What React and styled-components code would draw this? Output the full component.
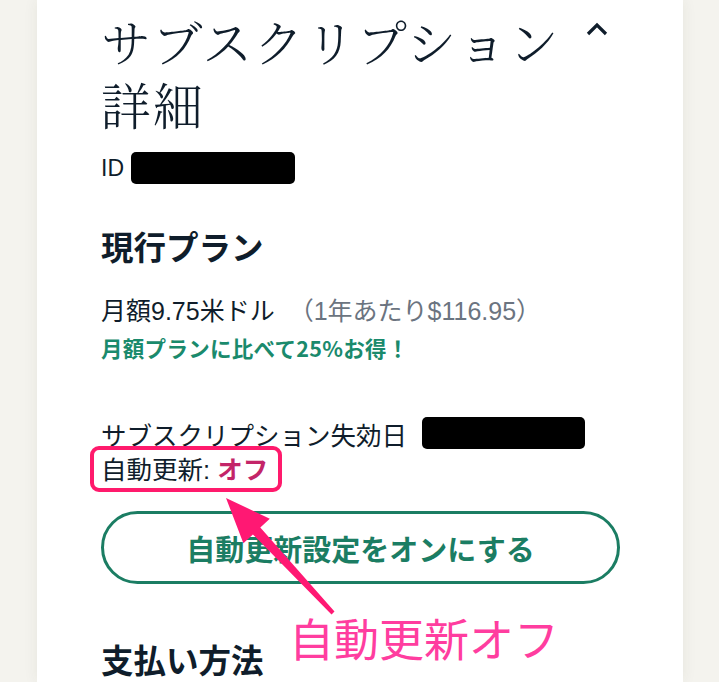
import React from "react";
import styled, { createGlobalStyle } from "styled-components";

const GlobalStyle = createGlobalStyle`
  html, body {
    margin: 0;
    padding: 0;
    background: #f4f3ee;
    overflow: hidden;
  }
  body {
    font-family: "Liberation Sans", "Noto Sans CJK JP", sans-serif;
    color: #0f1d2b;
  }
`;

const Page = styled.div`
  position: relative;
  width: 719px;
  height: 682px;
  overflow: hidden;
`;

const Card = styled.main`
  box-sizing: border-box;
  margin-left: 37px;
  width: 646px;
  height: 682px;
  padding: 9px 0 0 64px;
  background: #fff;
  box-shadow: 0 0 14px rgba(60, 50, 20, 0.07);
`;

const Title = styled.h1`
  margin: 0;
  font-family: "Noto Serif CJK JP", "Noto Sans CJK JP", serif;
  font-weight: 300;
  font-size: 50px;
  line-height: 63px;
  color: #0f1d2b;
  letter-spacing: 1.6px;

  svg {
    margin-left: 26px;
    vertical-align: 26px;
  }
`;

const Row = styled.div`
  display: flex;
  align-items: center;
  gap: ${(p) => p.$gap || 7}px;
  height: 32px;
  margin-top: ${(p) => p.$top}px;
  font-size: ${(p) => p.$size || 24}px;
`;

const Redacted = styled.span`
  display: inline-block;
  width: ${(p) => p.$w}px;
  height: 32px;
  background: #000;
  border-radius: 5px;
`;

const Heading = styled.h2`
  margin: ${(p) => p.$top}px 0 0;
  font-family: "Noto Sans CJK JP", sans-serif;
  font-weight: 700;
  font-size: 32.5px;
  line-height: 40px;
  color: #0f1d2b;
`;

const Price = styled.p`
  margin: 28px 0 0;
  font-size: 25px;
  line-height: 34px;

  span {
    color: #6b7480;
    margin-left: 14px;
  }
`;

const Deal = styled.p`
  margin: 7px 0 0;
  font-family: "Noto Sans CJK JP", sans-serif;
  font-weight: 700;
  font-size: 21.5px;
  line-height: 26px;
  letter-spacing: 0.3px;
  color: #1a8a6c;
`;

const Highlight = styled.div`
  display: inline-block;
  margin: -3px 0 0 -11px;
  padding: 0 10px 0 7px;
  border: 4px solid #ff1a6c;
  border-radius: 9px;
  font-size: 25.5px;
  line-height: 36px;

  b {
    color: #c32568;
    font-family: "Noto Sans CJK JP", sans-serif;
    font-weight: 700;
  }
`;

const OutlineButton = styled.button`
  display: block;
  box-sizing: border-box;
  width: 519px;
  height: 73px;
  margin-top: 19px;
  border: 3px solid #1b7d63;
  border-radius: 37px;
  background: #fff;
  color: #1b7d63;
  font-family: "Noto Sans CJK JP", sans-serif;
  font-weight: 700;
  font-size: 29px;
  cursor: pointer;
`;

const Overlay = styled.svg`
  position: absolute;
  top: 0;
  left: 0;
  pointer-events: none;
`;

const Note = styled.div`
  position: absolute;
  left: 289px;
  top: 611px;
  font-family: "Noto Sans CJK JP", sans-serif;
  font-size: 45px;
  line-height: 54px;
  color: #ff3d9f;
  white-space: nowrap;
`;

const Chevron = () => (
  <svg width="22" height="14" viewBox="0 0 22 14">
    <path d="M2 12 L11 3 L20 12" fill="none" stroke="#0f1d2b" strokeWidth="3.2" />
  </svg>
);

export default function App() {
  return (
    <Page>
      <GlobalStyle />
      <Card>
        <Title>
          サブスクリプション<Chevron />
          <br />
          詳細
        </Title>
        <Row $top={17} $size={23}>
          ID <Redacted $w={164} />
        </Row>
        <Heading $top={42}>現行プラン</Heading>
        <Price>
          月額9.75米ドル<span>（1年あたり$116.95）</span>
        </Price>
        <Deal>月額プランに比べて25%お得！</Deal>
        <Row $top={56} $size={25.5} $gap={15}>
          サブスクリプション失効日 <Redacted $w={163} />
        </Row>
        <Highlight>
          自動更新: <b>オフ</b>
        </Highlight>
        <OutlineButton>自動更新設定をオンにする</OutlineButton>
        <Heading $top={55}>支払い方法</Heading>
      </Card>
      <Overlay width="719" height="682" viewBox="0 0 719 682">
        <polygon
          fill="#ff1873"
          points="226,498 269.8,518.7 260.3,527.6 334.5,611.6 331.5,614.4 252.9,534.4 243.4,543.3"
        />
      </Overlay>
      <Note>自動更新オフ</Note>
    </Page>
  );
}
